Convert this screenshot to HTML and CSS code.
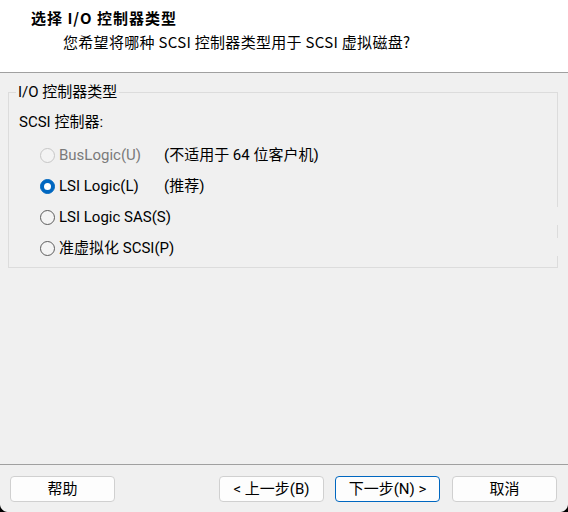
FILE: index.html
```html
<!DOCTYPE html>
<html lang="zh-CN">
<head>
<meta charset="utf-8">
<title>选择 I/O 控制器类型</title>
<link rel="stylesheet" href="styles.css">
</head>
<body>
<div class="dialog">
  <header class="head">
    <div class="title">选择 I/O 控制器类型</div>
    <div class="subtitle">您希望将哪种 SCSI 控制器类型用于 SCSI 虚拟磁盘?</div>
  </header>
  <main class="content">
    <fieldset class="group">
      <legend class="legend">I/O 控制器类型</legend>
      <div class="label">SCSI 控制器:</div>
      <div class="options">
        <div class="opt disabled">
          <span class="opt-main"><span class="radio"></span><span class="opt-text">BusLogic(U)</span></span>
          <span class="note">(不适用于 64 位客户机)</span>
        </div>
        <div class="opt">
          <span class="opt-main"><span class="radio on"></span><span class="opt-text">LSI Logic(L)</span></span>
          <span class="note">(推荐)</span>
        </div>
        <div class="opt">
          <span class="opt-main wide"><span class="radio"></span><span class="opt-text">LSI Logic SAS(S)</span></span>
        </div>
        <div class="opt">
          <span class="opt-main wide"><span class="radio"></span><span class="opt-text">准虚拟化 SCSI(P)</span></span>
        </div>
      </div>
    </fieldset>
  </main>
  <footer class="foot">
    <button class="btn">帮助</button>
    <div class="nav">
      <button class="btn">&lt; 上一步(B)</button>
      <button class="btn default">下一步(N) &gt;</button>
      <button class="btn cancel">取消</button>
    </div>
  </footer>
  <span class="glitch glitch-a"></span>
  <span class="glitch glitch-b"></span>
  <span class="corner corner-bl"></span>
  <span class="corner corner-br"></span>
</div>
</body>
</html>
```
FILE: styles.css
```css
html, body {
  margin: 0;
  padding: 0;
}
body {
  width: 568px;
  height: 512px;
  overflow: hidden;
  background: #f0f0f0;
  font-family: Roboto, "Noto Sans CJK SC", sans-serif;
  font-size: 15px;
  color: #000;
}
.dialog {
  position: relative;
  height: 512px;
  display: flex;
  flex-direction: column;
}
.head {
  box-sizing: border-box;
  height: 73px;
  background: #fff;
  border-bottom: 1px solid #a0a0a0;
  padding: 8px 0 0 31px;
  font-family: "Noto Sans CJK SC", sans-serif;
}
.title {
  font-weight: bold;
  line-height: 20px;
  letter-spacing: 1px;
}
.subtitle {
  margin-top: 4px;
  padding-left: 32px;
  line-height: 20px;
  letter-spacing: 0.3px;
}
.content {
  flex: 1;
  padding: 9px 10px 0 8px;
}
.group {
  margin: 0;
  padding: 0 0 9px 0;
  border: 1px solid #dcdcdc;
  min-width: 0;
}
.legend {
  margin-left: 7px;
  padding: 0 2px;
  line-height: 20px;
}
.label {
  margin: 10px 0 0 10px;
  line-height: 20px;
}
.options {
  margin-top: 13px;
  padding-left: 31px;
  display: flex;
  flex-direction: column;
  gap: 11px;
}
.opt {
  display: flex;
  align-items: center;
  height: 20px;
  line-height: 20px;
}
.opt-main {
  width: 124px;
  display: flex;
  align-items: center;
  gap: 4px;
}
.opt-main.wide {
  width: auto;
}
.radio {
  box-sizing: border-box;
  width: 15px;
  height: 15px;
  border-radius: 50%;
  border: 1px solid #5c5c5c;
  background: #f4f4f4;
  display: grid;
  place-items: center;
  flex: none;
}
.radio.on {
  background: #0067c0;
  border-color: #0067c0;
}
.radio.on::after {
  content: "";
  width: 7px;
  height: 7px;
  border-radius: 50%;
  background: #fff;
}
.disabled .radio {
  border-color: #c6c6c6;
  background: #f3f3f3;
}
.disabled .opt-text {
  color: #7a7a7a;
}
.foot {
  box-sizing: border-box;
  height: 48px;
  border-top: 1px solid #a0a0a0;
  padding: 11px 11px 0 10px;
  display: flex;
  justify-content: space-between;
  align-items: flex-start;
}
.nav {
  display: flex;
  gap: 11px;
}
.btn {
  box-sizing: border-box;
  width: 105px;
  height: 26px;
  padding: 0;
  border: 1px solid #d0d0d0;
  border-radius: 4px;
  background: #fdfdfd;
  font-family: Roboto, "Noto Sans CJK SC", sans-serif;
  font-size: 15px;
  line-height: 24px;
  color: #000;
}
.btn.default {
  border-color: #0067c0;
}
.btn.cancel {
  margin-left: 1px;
}
.glitch {
  position: absolute;
  left: 557px;
  width: 1px;
  height: 18px;
  background: #f0f0f0;
}
.glitch-a { top: 207px; }
.glitch-b { top: 238px; }
.corner {
  position: absolute;
  bottom: 0;
  width: 8px;
  height: 8px;
}
.corner-bl {
  left: 0;
  background: radial-gradient(circle at 100% 0, transparent 7.5px, #000 8.5px);
}
.corner-br {
  right: 0;
  background: radial-gradient(circle at 0 0, transparent 7.5px, #000 8.5px);
}
```
